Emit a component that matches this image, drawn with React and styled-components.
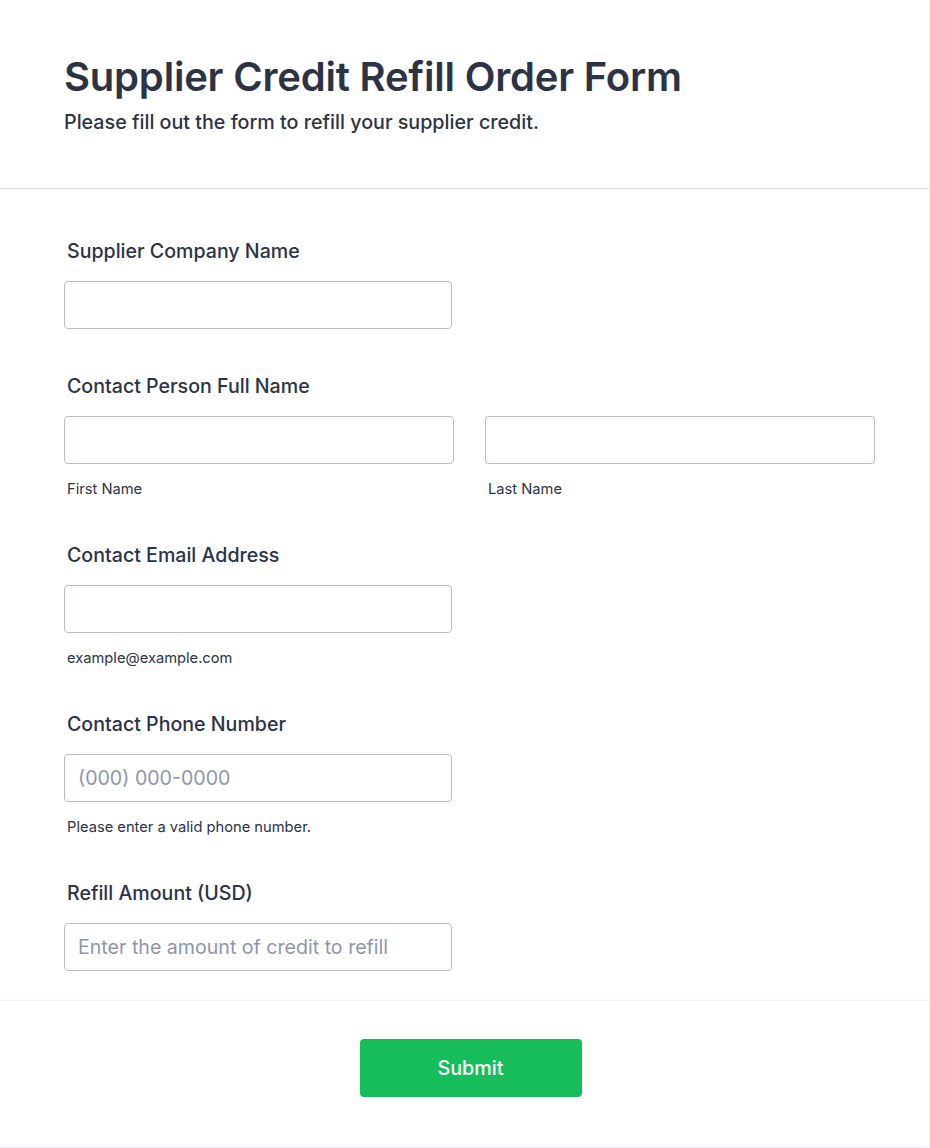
import React from "react";
import styled, { createGlobalStyle } from "styled-components";

const Global = createGlobalStyle`
  body {
    margin: 0;
    background: #ffffff;
    font-family: Inter, "Noto Sans", sans-serif;
    color: #2c3345;
  }
  * { box-sizing: border-box; }
`;

const Card = styled.div`
  width: 930px;
  background: #fff;
  border-right: 1px solid #eceef8;
  border-bottom: 1px solid #eceef8;
`;

const Header = styled.header`
  padding: 53px 64px 52px;
  border-bottom: 1px solid #dcdbea;
`;

const Title = styled.h1`
  margin: 0;
  font-size: 40px;
  line-height: 48px;
  font-weight: 600;
  letter-spacing: -0.2px;
  color: #2c3345;
`;

const Subtitle = styled.p`
  margin: 8px 0 0;
  font-size: 19.7px;
  line-height: 27px;
  font-weight: 500;
  color: #2c3345;
`;

const Body = styled.div`
  padding: 49px 64px 29px;
  border-bottom: 1px solid #eef0f7;
  display: flex;
  flex-direction: column;
  gap: 44px;
`;

const Field = styled.div`
  display: flex;
  flex-direction: column;
`;

const Label = styled.label`
  display: block;
  padding-left: 3px;
  font-size: 19.6px;
  line-height: 26px;
  font-weight: 500;
  margin-bottom: 17px;
`;

const Row = styled.div`
  display: flex;
  gap: 31px;
`;

const Col = styled.div`
  flex: none;
  display: flex;
  flex-direction: column;
  width: ${(p) => p.$w}px;
`;

const Input = styled.input`
  width: ${(p) => (p.$w ? `${p.$w}px` : "100%")};
  height: 48px;
  border: 1px solid #b8bdc9;
  border-radius: 4px;
  padding: 0 13px;
  font-family: inherit;
  font-size: 19.6px;
  color: #2c3345;
  background: #fff;
  outline: none;
  &::placeholder {
    color: #8f96a8;
  }
`;

const Sub = styled.span`
  display: block;
  padding-left: 3px;
  margin-top: 16px;
  font-size: 14.7px;
  line-height: 18px;
  color: #2c3345;
`;

const Footer = styled.div`
  display: flex;
  justify-content: center;
  padding: 38px 0 50px 12px;
`;

const Submit = styled.button`
  width: 222px;
  height: 58px;
  border: none;
  border-radius: 4px;
  background: #18bd5b;
  color: #fff;
  font-family: inherit;
  font-size: 19.8px;
  font-weight: 500;
  cursor: pointer;
`;

export default function App() {
  return (
    <>
      <Global />
      <Card>
        <Header>
          <Title>Supplier Credit Refill Order Form</Title>
          <Subtitle>Please fill out the form to refill your supplier credit.</Subtitle>
        </Header>
        <Body>
          <Field>
            <Label>Supplier Company Name</Label>
            <Input $w={388} />
          </Field>
          <Field>
            <Label>Contact Person Full Name</Label>
            <Row>
              <Col $w={390}>
                <Input />
                <Sub>First Name</Sub>
              </Col>
              <Col $w={390}>
                <Input />
                <Sub>Last Name</Sub>
              </Col>
            </Row>
          </Field>
          <Field>
            <Label>Contact Email Address</Label>
            <Input $w={388} />
            <Sub>example@example.com</Sub>
          </Field>
          <Field>
            <Label>Contact Phone Number</Label>
            <Input $w={388} placeholder="(000) 000-0000" />
            <Sub>Please enter a valid phone number.</Sub>
          </Field>
          <Field>
            <Label>Refill Amount (USD)</Label>
            <Input $w={388} placeholder="Enter the amount of credit to refill" />
          </Field>
        </Body>
        <Footer>
          <Submit>Submit</Submit>
        </Footer>
      </Card>
    </>
  );
}
